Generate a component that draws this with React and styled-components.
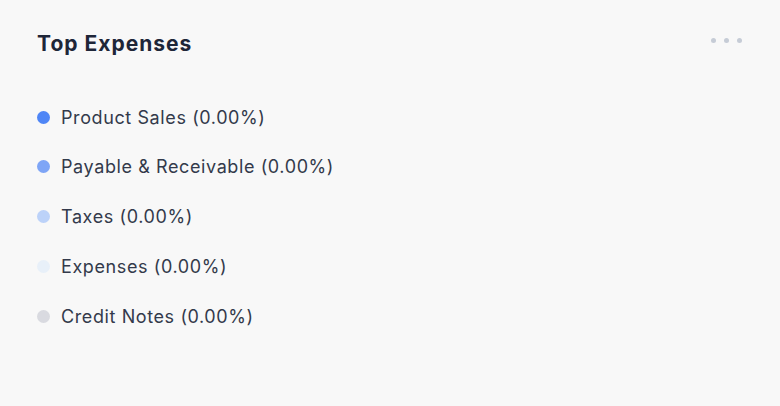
import React from "react"
import styled, { createGlobalStyle } from "styled-components"

const GlobalStyle = createGlobalStyle`
  html, body {
    margin: 0;
    padding: 0;
    background: #f8f8f8;
  }
  body {
    font-family: Inter, "Noto Sans", sans-serif;
  }
`

const Card = styled.section`
  width: 780px;
  height: 406px;
  box-sizing: border-box;
  padding: 28px 37px 0 37px;
  background: #f8f8f8;
`

const Header = styled.header`
  display: flex;
  justify-content: space-between;
  align-items: center;
  height: 30px;
`

const Title = styled.h2`
  margin: 0;
  font-size: 21px;
  font-weight: 700;
  color: #1e2638;
  letter-spacing: 1px;
`

const MenuDots = styled.button`
  display: flex;
  gap: 8px;
  padding: 0;
  margin: -6px 1px 0 0;
  border: 0;
  background: none;
  span {
    width: 5px;
    height: 5px;
    border-radius: 50%;
    background: #c6ccd6;
  }
`

const Legend = styled.ul`
  list-style: none;
  margin: 48px 0 0 0;
  padding: 0;
  display: flex;
  flex-direction: column;
  gap: 27.75px;
`

const Item = styled.li`
  display: flex;
  align-items: center;
  gap: 11px;
  height: 22px;
  font-size: 18px;
  letter-spacing: 0.6px;
  color: #333a4b;
`

const Dot = styled.span`
  width: 13px;
  height: 13px;
  border-radius: 50%;
  background: ${p => p.color};
  flex-shrink: 0;
`

const items = [
  { label: "Product Sales", color: "#4f86f6" },
  { label: "Payable & Receivable", color: "#7ea5f6" },
  { label: "Taxes", color: "#bcd2f9" },
  { label: "Expenses", color: "#e8f0f9" },
  { label: "Credit Notes", color: "#d9dae0" },
]

export default function App() {
  return (
    <>
      <GlobalStyle />
      <Card>
        <Header>
          <Title>Top Expenses</Title>
          <MenuDots aria-label="More">
            <span />
            <span />
            <span />
          </MenuDots>
        </Header>
        <Legend>
          {items.map(item => (
            <Item key={item.label}>
              <Dot color={item.color} />
              {item.label} (0.00%)
            </Item>
          ))}
        </Legend>
      </Card>
    </>
  )
}
